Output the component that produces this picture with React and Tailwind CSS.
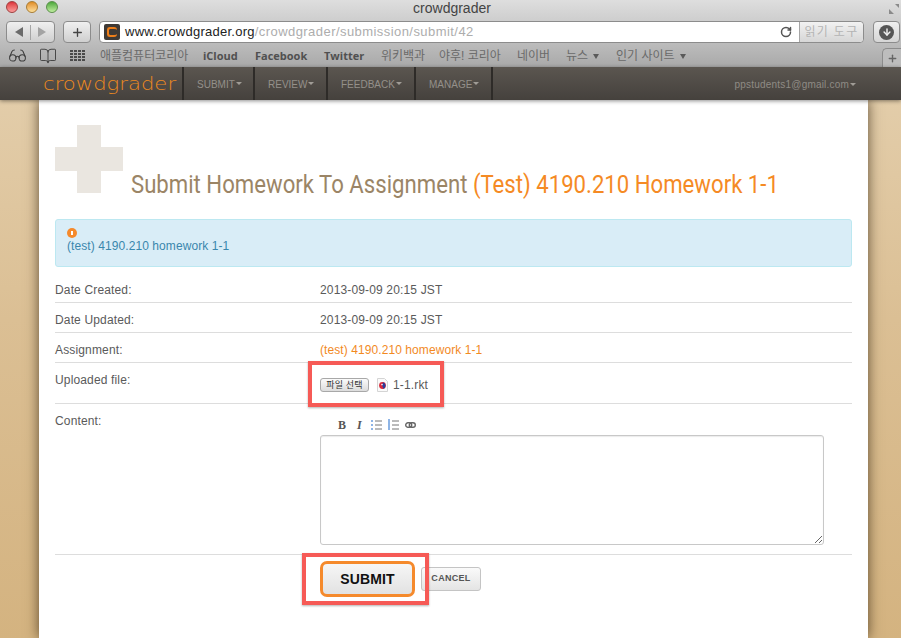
import React from "react";
import { Glasses, BookOpen, RotateCw, ArrowDown, Plus } from "lucide-react";

const sans = { fontFamily: '"Liberation Sans", "Noto Sans CJK KR", sans-serif' };

const Bookmark = ({ children, className = "" }) => (
  <span className={`text-[12px] leading-none whitespace-nowrap text-[#6a6a6a] ${className}`}>{children}</span>
);

const BoldBookmark = ({ children, className = "" }) => (
  <span className={`text-[11px] leading-none whitespace-nowrap font-bold text-[#505050] font-['Open_Sans'] ${className}`}>
    {children}
  </span>
);

const MenuArrow = () => (
  <span className="ml-[5px] inline-block align-middle border-x-[3.5px] border-x-transparent border-t-[5px] border-t-[#5a5a5a]" />
);

const NavItem = ({ label, className }) => (
  <div className={`h-full flex items-center pl-[13px] pt-px border-r-2 border-[#2e2b28] text-[10px] text-[#94908a] ${className}`}>
    {label}
    <span className="ml-px mb-px border-x-[3px] border-x-transparent border-t-[3px] border-t-[#a09c96]" />
  </div>
);

const Row = ({ label, children }) => (
  <div className="grid grid-cols-[265px_1fr] h-[30px] pt-[10px] border-b border-[#dddddd] text-xs tracking-[0.15px] leading-[14px] text-[#5a5a5a]">
    <div>{label}</div>
    <div>{children}</div>
  </div>
);

export default function App() {
  return (
    <div className="w-[901px] h-[638px] overflow-hidden bg-gradient-to-b from-[#e6d3b3] via-[#dbbf94] to-[#d4b380]" style={sans}>
      {/* browser title + toolbar */}
      <div className="h-[67px] bg-gradient-to-b from-[#dedede] via-[#c4c4c4] to-[#a9a9a9] flex flex-col">
        <div className="h-[20px] flex items-start pt-px pl-[6px] gap-2">
          <span className="w-3 h-3 rounded-full bg-gradient-to-b from-[#dc2f3a] to-[#fa9c9c] border border-[#a04040]" />
          <span className="w-3 h-3 rounded-full bg-gradient-to-b from-[#e08c1e] to-[#fce09a] border border-[#a87c34]" />
          <span className="w-3 h-3 rounded-full bg-gradient-to-b from-[#4aa83a] to-[#c0eea0] border border-[#5b8f4b]" />
          <div className="flex-1 text-center text-[14px] leading-[14px] text-[#444444] pr-[42px]">crowdgrader</div>
          <svg className="w-[12px] h-[12px] mr-[1px] mt-[2px]" viewBox="0 0 12 12">
            <path d="M1 11 L1 6 L6 11 Z M7 1 L11 1 L11 5 Z" fill="#8a8a8a" />
          </svg>
        </div>

        <div className="h-[24px] flex items-center pl-[6px]">
          <div className="w-[49px] h-[22px] rounded border border-[#8c8c8c] bg-gradient-to-b from-[#f0f0f0] to-[#cfcfcf] flex items-center">
            <span className="ml-[8px] border-y-[5px] border-y-transparent border-r-[8px] border-r-[#6b6b6b]" />
            <span className="ml-[7px] h-[15px] w-px bg-[#a5a5a5]" />
            <span className="ml-[7px] border-y-[5px] border-y-transparent border-l-[8px] border-l-[#a3a3a3]" />
          </div>
          <div className="ml-[8px] w-[28px] h-[22px] rounded border border-[#8c8c8c] bg-gradient-to-b from-[#f0f0f0] to-[#cfcfcf] flex items-center justify-center">
            <Plus size={13} strokeWidth={2.5} color="#444444" />
          </div>
          <div className="ml-[8px] w-[765px] h-[22px] rounded border border-[#8c8c8c] bg-white flex items-center">
            <div className="ml-[4px] w-[16px] h-[16px] rounded-[2px] bg-[#3f3a36] flex items-center justify-center">
              <span className="w-[10px] h-[10px] rounded-[3px] border-[2.5px] border-r-0 border-[#ef7f1a]" />
            </div>
            <div className="ml-[5px] text-[13px] tracking-[0.25px] whitespace-nowrap text-[#222222]">
              www.crowdgrader.org<span className="text-[#adadad] tracking-[0.44px]">/crowdgrader/submission/submit/42</span>
            </div>
            <RotateCw size={12} strokeWidth={3} color="#555555" className="ml-auto mr-[7px]" />
            <div className="w-[64px] h-full rounded-r border-l border-[#a5a5a5] bg-gradient-to-b from-[#f2f2f2] to-[#d6d6d6] text-[12px] tracking-[1.3px] text-[#b4b4b4] flex items-center justify-center">
              읽기 도구
            </div>
          </div>
          <div className="ml-[9px] w-[27px] h-[22px] rounded border border-[#8c8c8c] bg-gradient-to-b from-[#f0f0f0] to-[#d5d5d5] flex items-center justify-center">
            <span className="w-[15px] h-[15px] rounded-full bg-[#555555] flex items-center justify-center">
              <ArrowDown size={10} strokeWidth={3.5} color="#eeeeee" />
            </span>
          </div>
        </div>

        <div className="relative flex-1 flex items-center pl-[8px]">
          <Glasses size={19} strokeWidth={1.3} color="#3c3c3c" />
          <BookOpen size={18} strokeWidth={1.2} color="#3c3c3c" className="ml-[12px]" />
          <svg className="ml-[13px]" width="16" height="12" viewBox="0 0 16 12" fill="#4a4a4a">
            <path d="M0 0h3v2H0zM4 0h3v2H4zM8 0h3v2H8zM12 0h3v2h-3zM0 3h3v2H0zM4 3h3v2H4zM8 3h3v2H8zM12 3h3v2h-3zM0 6h3v2H0zM4 6h3v2H4zM8 6h3v2H8zM12 6h3v2h-3zM0 9h3v2H0zM4 9h3v2H4zM8 9h3v2H8zM12 9h3v2h-3z" />
          </svg>
          <Bookmark className="ml-[14px] w-[103px]">애플컴퓨터코리아</Bookmark>
          <BoldBookmark className="w-[52px]">iCloud</BoldBookmark>
          <BoldBookmark className="w-[69px]">Facebook</BoldBookmark>
          <BoldBookmark className="w-[57px]">Twitter</BoldBookmark>
          <Bookmark className="w-[58px]">위키백과</Bookmark>
          <Bookmark className="w-[78px]">야후! 코리아</Bookmark>
          <Bookmark className="w-[49px]">네이버</Bookmark>
          <Bookmark className="w-[50px]">뉴스<MenuArrow /></Bookmark>
          <Bookmark>인기 사이트<MenuArrow /></Bookmark>
          <div className="absolute right-0 bottom-0 w-[19px] h-[19px] rounded-tl-[5px] border-l border-t border-[#8c8c8c] bg-[#bdbdbd] flex items-center justify-center">
            <Plus size={11} strokeWidth={3} color="#666666" />
          </div>
        </div>
      </div>

      {/* crowdgrader nav */}
      <div className="relative z-10 h-[33px] bg-gradient-to-b from-[#5b5650] to-[#45413d] flex items-center shadow-[0_1px_4px_rgba(0,0,0,0.45)]">
        <div className="w-[43px] h-full" />
        <div className="w-[141px] h-full flex items-center pt-px border-r-2 border-[#2e2b28]">
          <span className="inline-block origin-left scale-x-[1.245] text-[17px] text-[#ee8a20] font-['DejaVu_Sans'] font-extralight leading-none">
            crowdgrader
          </span>
        </div>
        <NavItem label="SUBMIT" className="w-[71px]" />
        <NavItem label="REVIEW" className="w-[73px]" />
        <NavItem label="FEEDBACK" className="w-[88px]" />
        <NavItem label="MANAGE" className="w-[77px]" />
        <div className="ml-auto mr-[45px] pt-px text-[10px] tracking-[0.2px] text-[#8f8b85] flex items-center">
          ppstudents1@gmail.com
          <span className="ml-px border-x-[3px] border-x-transparent border-t-[3px] border-t-[#a09c96]" />
        </div>
      </div>

      {/* page panel */}
      <div className="ml-[39px] w-[829px] h-[538px] bg-white px-4 pt-[25px] shadow-[0_0_12px_rgba(50,35,15,0.75)]">
        <div className="flex items-end">
          <svg className="shrink-0" width="68" height="68" viewBox="0 0 68 68" fill="#eae6e0">
            <path d="M22 0h24v22h22v24H46v22H22V46H0V22h22z" />
          </svg>
          <h1 className="ml-2 text-[26.5px] leading-[30px] -mb-[6px] whitespace-nowrap origin-left scale-x-[0.836] text-[#9b8566] font-normal font-['Roboto']">
            Submit Homework To Assignment <span className="text-[#f58a24]">(Test) 4190.210 Homework 1-1</span>
          </h1>
        </div>

        <div className="mt-[26px] h-[48px] rounded-[3px] border border-[#bce8f1] bg-[#d9edf7] pl-[11px] pt-[8px] text-xs tracking-[0.08px] leading-[14px] text-[#3a87ad]">
          <div className="w-[10px] h-[10px] rounded-full bg-[#f58a2c] flex items-center justify-center">
            <span className="w-[2px] h-[4px] bg-white" />
          </div>
          <div className="mt-px">(test) 4190.210 homework 1-1</div>
        </div>

        <div className="mt-[6px]">
          <Row label="Date Created:">2013-09-09 20:15 JST</Row>
          <Row label="Date Updated:">2013-09-09 20:15 JST</Row>
          <Row label="Assignment:">
            <span className="text-[#f28a1f] tracking-[0.08px]">(test) 4190.210 homework 1-1</span>
          </Row>

          <div className="relative grid grid-cols-[265px_1fr] h-[41px] pt-[10px] border-b border-[#dddddd] text-xs tracking-[0.15px] leading-[14px] text-[#5a5a5a]">
            <div>Uploaded file:</div>
            <div className="flex items-start">
              <div className="mt-[5px] w-[49px] h-[14px] rounded-[3px] border border-[#a8a8a8] bg-gradient-to-b from-[#fbfbfb] to-[#dcdcdc] text-[9px] leading-[12px] text-center text-[#333333]">
                파일 선택
              </div>
              <svg className="ml-[8px] mt-[5px]" width="11" height="14" viewBox="0 0 11 14">
                <path d="M0.5 0.5h7l3 3v10h-10z" fill="#fafafa" stroke="#d4d4d4" />
                <circle cx="5.5" cy="7.5" r="3.4" fill="#d8283a" />
                <path d="M6 4.2a3.4 3.4 0 0 1 0 6.6a3 3 0 0 0 -1-3z" fill="#2b3d9c" />
                <circle cx="5" cy="6.6" r="0.8" fill="#ffffff" />
              </svg>
              <span className="ml-[5px] mt-[5px]">1-1.rkt</span>
            </div>
            {/* annotation */}
            <div className="absolute left-[253px] -top-[2px] w-[136px] h-[46px] border-[4px] border-[#f65a56] shadow-[0_1px_2px_rgba(0,0,0,0.3)]" />
          </div>

          <div className="grid grid-cols-[265px_1fr] h-[151px] pt-[10px] border-b border-[#dddddd] text-xs tracking-[0.15px] leading-[14px] text-[#5a5a5a]">
            <div>Content:</div>
            <div>
              <div className="h-[21px] flex items-center pl-[18px]">
                <span className="w-[19px] font-['Liberation_Serif'] font-bold text-[12px] text-[#555555]">B</span>
                <span className="w-[14px] font-['Liberation_Serif'] font-bold italic text-[12px] text-[#555555]">I</span>
                <svg width="11" height="11" viewBox="0 0 11 11">
                  <path d="M0 1h2v2H0zM0 5h2v2H0zM0 9h2v2H0z" fill="#8fb5e6" />
                  <path d="M4 2h7M4 6h7M4 10h7" stroke="#777777" />
                </svg>
                <svg className="ml-[6px]" width="11" height="11" viewBox="0 0 11 11">
                  <path d="M0 0h2v11H0z" fill="#8fb5e6" />
                  <path d="M4 2h7M4 6h7M4 10h7" stroke="#777777" />
                </svg>
                <svg className="ml-[6px]" width="11" height="6" viewBox="0 0 11 6" fill="none" stroke="#666666" strokeWidth="1.4">
                  <rect x="0.7" y="0.7" width="6" height="4.6" rx="2.3" />
                  <rect x="4.3" y="0.7" width="6" height="4.6" rx="2.3" />
                </svg>
              </div>
              <textarea
                readOnly
                className="block w-[504px] h-[110px] rounded-[3px] border border-[#c8c8c8] bg-white shadow-[inset_0_1px_1px_rgba(0,0,0,0.08)]"
              />
            </div>
          </div>

          <div className="relative grid grid-cols-[265px_1fr] pt-[6px]">
            <div />
            <div className="flex items-center">
              <div className="w-[95px] h-[36px] rounded-[7px] border-[3px] border-[#f58a2c] bg-gradient-to-b from-[#f6f6f6] to-[#e2e2e2] flex items-center justify-center text-sm tracking-[0.15px] font-bold text-[#111111]">
                SUBMIT
              </div>
              <div className="ml-[6px] w-[60px] h-[24px] rounded-[3px] border border-[#c4c4c4] bg-gradient-to-b from-[#fafafa] to-[#e4e4e4] flex items-center justify-center text-[9px] font-bold tracking-[0.3px] text-[#555555]">
                CANCEL
              </div>
            </div>
            {/* annotation */}
            <div className="absolute left-[247px] -top-[2px] w-[127px] h-[52px] border-[4px] border-[#f65a56] shadow-[0_1px_2px_rgba(0,0,0,0.3)]" />
          </div>
        </div>
      </div>
    </div>
  );
}
